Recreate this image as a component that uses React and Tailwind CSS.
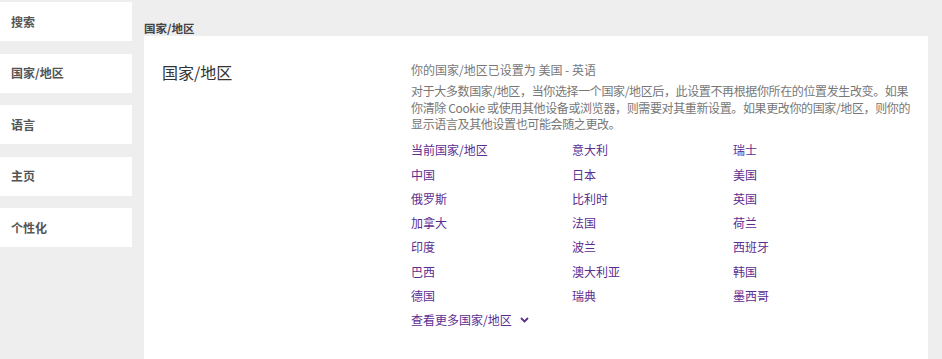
import React from "react";

const font = { fontFamily: '"Microsoft YaHei", "Noto Sans CJK SC", "Liberation Sans", sans-serif' };

const navItems = ["搜索", "国家/地区", "语言", "主页", "个性化"];

const countries = [
  "当前国家/地区", "意大利", "瑞士",
  "中国", "日本", "美国",
  "俄罗斯", "比利时", "英国",
  "加拿大", "法国", "荷兰",
  "印度", "波兰", "西班牙",
  "巴西", "澳大利亚", "韩国",
  "德国", "瑞典", "墨西哥",
];

export default function App() {
  return (
    <div className="flex w-[942px] h-[359px] overflow-hidden bg-[#eeeeee]" style={font}>
      {/* left nav */}
      <div className="w-[132px] shrink-0 pt-[2px] flex flex-col gap-[12.5px]">
        {navItems.map((item) => (
          <div key={item} className="h-[39px] bg-white flex items-center pl-[11px] text-[12px] font-bold text-[#555]">
            {item}
          </div>
        ))}
      </div>

      {/* main */}
      <div className="ml-[12px] w-[784px] flex flex-col">
        <div className="h-[36px] flex items-end pb-[2px] text-[11.5px] font-bold text-[#444] leading-none">
          国家/地区
        </div>
        <div className="flex-1 bg-white flex pl-[18px] pt-[24px]">
          <div className="w-[249px] shrink-0 text-[16px] text-[#333] leading-[24px]">国家/地区</div>
          <div className="w-[510px]">
            <p className="text-[12px] text-[#777] leading-[20px]">你的国家/地区已设置为 美国 - 英语</p>
            <p className="mt-[3px] text-[12px] tracking-[-0.37px] text-[#777] leading-[16.7px] whitespace-nowrap">
              对于大多数国家/地区，当你选择一个国家/地区后，此设置不再根据你所在的位置发生改变。如果
              <br />
              你清除 Cookie 或使用其他设备或浏览器，则需要对其重新设置。如果更改你的国家/地区，则你的
              <br />
              显示语言及其他设置也可能会随之更改。
            </p>
            <div className="mt-[5px] grid grid-cols-[161px_161px_161px]">
              {countries.map((c) => (
                <a key={c} href="#" className="h-[24.3px] flex items-center text-[12px] text-[#5c2d91]">
                  {c}
                </a>
              ))}
            </div>
            <a href="#" className="h-[24.3px] flex items-center gap-[8px] text-[12px] text-[#5c2d91]">
              查看更多国家/地区
              <svg width="9" height="6" viewBox="0 0 9 6" fill="none">
                <path d="M1 1l3.5 3.5L8 1" stroke="#5c2d91" strokeWidth="1.8" />
              </svg>
            </a>
          </div>
        </div>
      </div>
    </div>
  );
}
